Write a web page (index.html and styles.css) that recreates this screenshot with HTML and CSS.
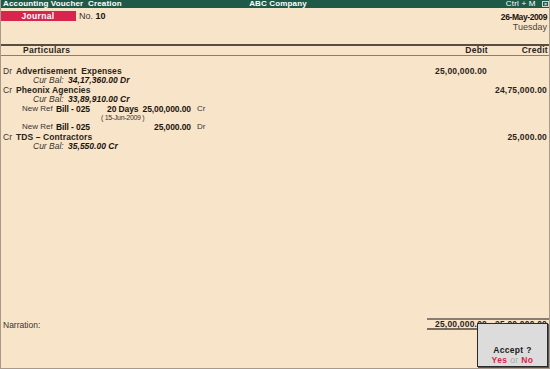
FILE: index.html
```html
<!DOCTYPE html>
<html lang="en">
<head>
    <meta charset="UTF-8">
    <title>Accounting Voucher Creation</title>
    <link rel="stylesheet" href="styles.css">
</head>
<body>
    <div class="screen">
        <!-- Title bar -->
        <div class="titlebar">
            <span class="title-left">Accounting Voucher&nbsp; Creation</span>
            <span class="title-mid">ABC Company</span>
            <span class="title-right">Ctrl + M <span class="close-box">×</span></span>
        </div>

        <!-- Voucher head -->
        <div class="voucher-head">
            <div class="voucher-type">Journal</div>
            <div class="voucher-no">No. <b>10</b></div>
            <div class="voucher-date">
                <div class="date">26-May-2009</div>
                <div class="day">Tuesday</div>
            </div>
        </div>

        <div class="col-head">
            <span class="particulars">Particulars</span>
            <span class="amount">Debit</span>
            <span class="amount">Credit</span>
        </div>

        <!-- Entries -->
        <div class="entries">
            <div class="row">
                <span><span class="drcr">Dr</span><b class="ledger">Advertisement&nbsp; Expenses</b></span>
                <span class="amount">25,00,000.00</span>
                <span class="amount"></span>
            </div>
            <div class="row">
                <span class="curbal">Cur Bal: <b>34,17,360.00 Dr</b></span>
                <span></span><span></span>
            </div>
            <div class="row">
                <span><span class="drcr">Cr</span><b class="ledger">Pheonix Agencies</b></span>
                <span class="amount"></span>
                <span class="amount">24,75,000.00</span>
            </div>
            <div class="row">
                <span class="curbal">Cur Bal: <b>33,89,910.00 Cr</b></span>
                <span></span><span></span>
            </div>
            <div class="row">
                <span class="billref">
                    <span class="ref-type">New Ref</span>
                    <b class="ref-name">Bill - 025</b>
                    <b class="ref-days">20 Days</b>
                    <b class="ref-amt">25,00,000.00</b>
                    <span class="ref-side">Cr</span>
                </span>
                <span></span><span></span>
            </div>
            <div class="row small">
                <span class="due-date">( 15-Jun-2009 )</span>
                <span></span><span></span>
            </div>
            <div class="row">
                <span class="billref">
                    <span class="ref-type">New Ref</span>
                    <b class="ref-name">Bill - 025</b>
                    <b class="ref-days"></b>
                    <b class="ref-amt">25,000.00</b>
                    <span class="ref-side">Dr</span>
                </span>
                <span></span><span></span>
            </div>
            <div class="row">
                <span><span class="drcr">Cr</span><b class="ledger">TDS – Contractors</b></span>
                <span class="amount"></span>
                <span class="amount">25,000.00</span>
            </div>
            <div class="row">
                <span class="curbal">Cur Bal: <b>35,550.00 Cr</b></span>
                <span></span><span></span>
            </div>
        </div>

        <!-- Narration and totals -->
        <div class="footer-row">
            <span class="narration">Narration:</span>
            <div class="totals">
                <span class="amount">25,00,000.00</span>
                <span class="amount">25,00,000.00</span>
            </div>
        </div>

        <!-- Accept dialog -->
        <div class="accept">
            <div class="accept-q">Accept ?</div>
            <div class="accept-opts"><span class="opt">Yes</span> <span class="or">or</span> <span class="opt">No</span></div>
        </div>
    </div>
</body>
</html>
```

FILE: styles.css
```css
* {
    box-sizing: border-box;
}

body {
    margin: 0;
    font-family: 'Liberation Sans', Arial, sans-serif;
    font-size: 8.5px;
    color: #2a2420;
    background: #f8e4c8;
}

.screen {
    position: relative;
    width: 550px;
    height: 369px;
    display: flex;
    flex-direction: column;
    background: #f8e4c8;
    border-left: 1px solid #a8998a;
    border-right: 1px solid #a8998a;
    border-bottom: 1px solid #a8998a;
    overflow: hidden;
}

/* title bar */
.titlebar {
    height: 8px;
    background: #1f5a48;
    color: #fff;
    font-weight: bold;
    font-size: 8px;
    line-height: 8px;
    display: flex;
    align-items: center;
    justify-content: space-between;
    padding: 0 1px 0 3px;
    margin: 0 -1px;
    letter-spacing: 0.15px;
}

.title-left, .title-right {
    flex: 1;
}

.title-mid {
    flex: none;
    margin-left: 4px;
}

.title-right {
    text-align: right;
    font-weight: normal;
    letter-spacing: 0.2px;
}

.close-box {
    display: inline-block;
    width: 7px;
    height: 6px;
    line-height: 5px;
    margin-left: 4px;
    border: 1px solid #c8d8d0;
    font-size: 6px;
    text-align: center;
    letter-spacing: 0;
    vertical-align: 0;
}

/* voucher head */
.voucher-head {
    display: flex;
    align-items: flex-start;
    padding-top: 3px;
    height: 36px;
    margin-left: -1px;
}

.voucher-type {
    width: 76px;
    height: 10px;
    background: #d7254e;
    color: #fff;
    font-weight: bold;
    font-size: 8.5px;
    line-height: 10px;
    text-align: center;
    letter-spacing: 0.3px;
}

.voucher-no {
    margin-left: 3px;
    line-height: 10px;
    font-size: 9px;
    color: #3a3430;
}

.voucher-no b {
    color: #1a1410;
}

.voucher-date {
    margin-left: auto;
    padding-right: 2px;
    text-align: right;
    line-height: 10px;
    padding-top: 1px;
}

.date {
    font-weight: bold;
    letter-spacing: -0.4px;
    color: #1a1410;
}

.day {
    font-size: 9px;
    color: #4a4440;
    line-height: 11px;
}

/* column header */
.col-head {
    display: grid;
    grid-template-columns: 1fr 70px 60px;
    border-top: 2px solid #5a4c40;
    border-bottom: 1px solid #8a7c70;
    height: 12px;
    line-height: 9px;
    padding: 0 2px 0 0;
    font-weight: bold;
    letter-spacing: 0.3px;
    margin: 0 -1px;
}

.particulars {
    padding-left: 23px;
}

.amount {
    text-align: right;
}

/* entries */
.entries {
    padding-top: 10px;
    flex: 1;
}

.row {
    display: grid;
    grid-template-columns: 1fr 70px 60px;
    height: 9.4px;
    line-height: 10px;
    padding-right: 2px;
    white-space: nowrap;
}

.row .amount {
    font-weight: bold;
    letter-spacing: 0.2px;
}

.drcr {
    display: inline-block;
    width: 15px;
    padding-left: 2px;
    color: #3a3430;
}

.ledger {
    letter-spacing: 0.1px;
}

.curbal {
    padding-left: 32px;
    font-style: italic;
    color: #3a3430;
}

.curbal b {
    color: #1a1410;
    margin-left: 2px;
}

.billref {
    display: flex;
    padding-left: 21px;
    color: #3a3430;
    font-size: 8px;
}

.billref b {
    color: #1a1410;
    font-size: 8.5px;
    letter-spacing: -0.1px;
}

.ref-type {
    width: 34px;
}

.ref-name {
    width: 51px;
}

.ref-days {
    width: 31px;
}

.ref-amt {
    width: 53px;
    text-align: right;
}

.ref-side {
    margin-left: 6px;
}

.row.small {
    font-size: 7px;
}

.due-date {
    padding-left: 100px;
    letter-spacing: -0.3px;
    color: #3a3430;
}

/* narration and totals */
.footer-row {
    display: flex;
    align-items: flex-start;
    height: 50px;
}

.narration {
    padding-left: 2px;
    margin-top: 2px;
    color: #3a3430;
}

.totals {
    margin-left: auto;
    width: 122px;
    display: grid;
    grid-template-columns: 60px 60px;
    border-top: 2px solid #8a7c70;
    border-bottom: 2px solid #7a6c60;
    height: 12px;
    line-height: 8px;
    padding-right: 2px;
    font-weight: bold;
    letter-spacing: 0.2px;
}

/* accept dialog */
.accept {
    position: absolute;
    right: 1px;
    bottom: 1px;
    width: 71px;
    height: 44px;
    background: #dcdcdc;
    border: 1px solid #2a2a2a;
    box-shadow: 1px 1px 0 #555;
    text-align: center;
    font-weight: bold;
}

.accept-q {
    margin-top: 21px;
    line-height: 10px;
    font-size: 8.5px;
    letter-spacing: 0.3px;
    color: #1a1a1a;
}

.accept-opts {
    line-height: 10px;
    font-size: 8.5px;
    letter-spacing: 0.4px;
}

.opt {
    color: #d7254e;
}

.or {
    color: #a8a8a8;
    font-weight: normal;
}
```
